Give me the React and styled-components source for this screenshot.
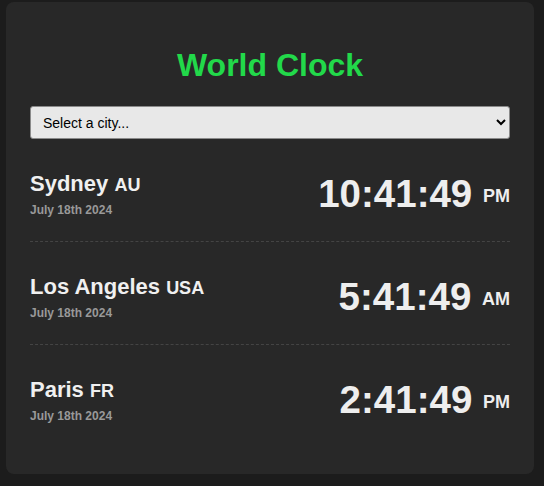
import React from "react";
import styled, { createGlobalStyle } from "styled-components";

const GlobalStyle = createGlobalStyle`
  body {
    margin: 0;
    background: #1c1c1c;
    font-family: "Liberation Sans", Arial, sans-serif;
  }
`;

const cities = [
  { name: "Sydney", country: "AU", date: "July 18th 2024", time: "10:41:49", period: "PM" },
  { name: "Los Angeles", country: "USA", date: "July 18th 2024", time: "5:41:49", period: "AM" },
  { name: "Paris", country: "FR", date: "July 18th 2024", time: "2:41:49", period: "PM" },
];

const App = () => {
  return (
    <Page>
      <GlobalStyle />
      <Card>
        <Title>World Clock</Title>
        <CitySelect defaultValue="">
          <option value="">Select a city...</option>
          <option value="tokyo">Tokyo</option>
          <option value="london">London</option>
          <option value="newyork">New York</option>
        </CitySelect>
        <ClockList>
          {cities.map((city, i) => (
            <ClockRow key={city.name} last={i === cities.length - 1}>
              <CityInfo>
                <CityName>
                  {city.name} <Country>{city.country}</Country>
                </CityName>
                <CityDate>{city.date}</CityDate>
              </CityInfo>
              <Time>
                {city.time} <Period>{city.period}</Period>
              </Time>
            </ClockRow>
          ))}
        </ClockList>
      </Card>
    </Page>
  );
};

const Page = styled.div`
  padding: 2px 10px 12px 6px;
`;

const Card = styled.div`
  background: #282828;
  border-radius: 8px;
  padding: 24px 24px 27px;
`;

const Title = styled.h1`
  margin: 21px 0 22px;
  text-align: center;
  font-size: 32px;
  font-weight: bold;
  color: #22d94a;
`;

const CitySelect = styled.select`
  display: block;
  width: 100%;
  height: 33px;
  padding: 0 8px;
  font-family: "Liberation Sans", Arial, sans-serif;
  font-size: 14px;
  color: #000;
  background: #e8e8e8;
  border: 1px solid #8a8a8a;
  border-radius: 3px;
`;

const ClockList = styled.div`
  display: flex;
  flex-direction: column;
`;

const ClockRow = styled.div`
  display: flex;
  justify-content: space-between;
  align-items: center;
  padding: 32px 0 24px;
  border-bottom: ${(p) => (p.last ? "none" : "1px dashed #444")};
`;

const CityInfo = styled.div`
  display: flex;
  flex-direction: column;
`;

const CityName = styled.div`
  font-size: 22px;
  font-weight: bold;
  color: #f0f0f0;
  margin-bottom: 6px;
`;

const Country = styled.span`
  font-size: 18px;
`;

const CityDate = styled.div`
  font-size: 12px;
  font-weight: bold;
  color: #999;
`;

const Time = styled.div`
  font-size: 38.5px;
  line-height: 46px;
  font-weight: bold;
  color: #eee;
`;

const Period = styled.span`
  font-size: 18px;
  line-height: normal;
  vertical-align: 5px;
`;

export default App;
